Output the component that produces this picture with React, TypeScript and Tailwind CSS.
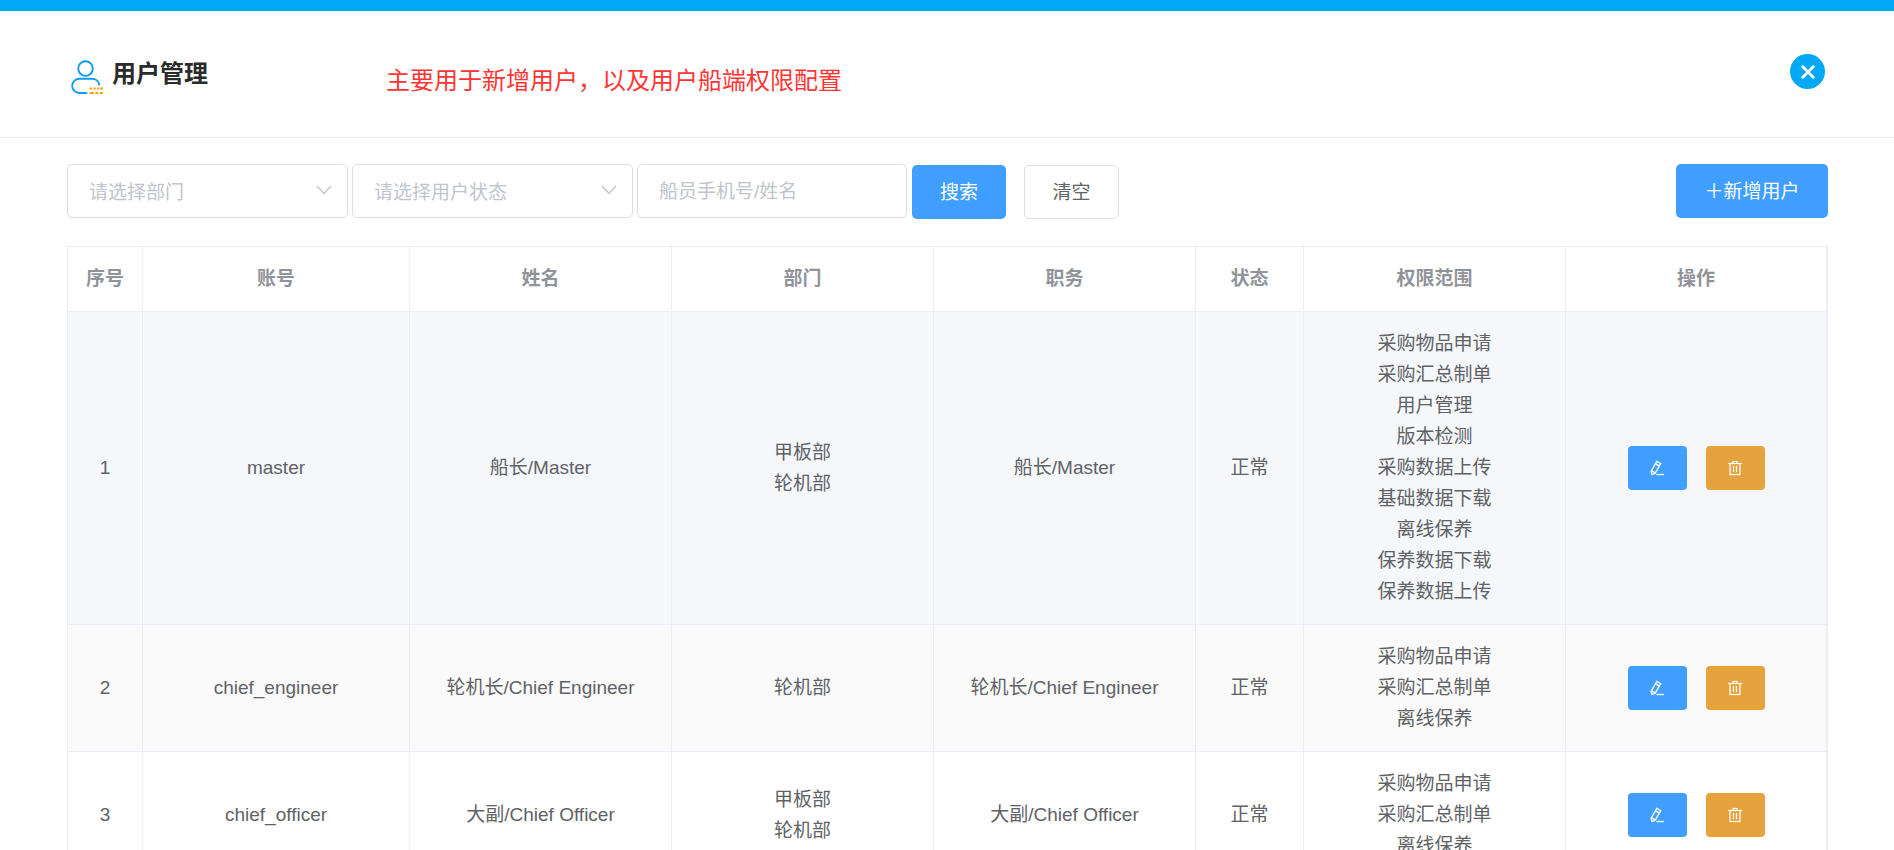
import type { ReactNode } from "react";

type User = {
  account: string;
  name: string;
  departments: string[];
  duty: string;
  status: string;
  scopes: string[];
};

const users: User[] = [
  {
    account: "master",
    name: "船长/Master",
    departments: ["甲板部", "轮机部"],
    duty: "船长/Master",
    status: "正常",
    scopes: [
      "采购物品申请",
      "采购汇总制单",
      "用户管理",
      "版本检测",
      "采购数据上传",
      "基础数据下载",
      "离线保养",
      "保养数据下载",
      "保养数据上传",
    ],
  },
  {
    account: "chief_engineer",
    name: "轮机长/Chief Engineer",
    departments: ["轮机部"],
    duty: "轮机长/Chief Engineer",
    status: "正常",
    scopes: ["采购物品申请", "采购汇总制单", "离线保养"],
  },
  {
    account: "chief_officer",
    name: "大副/Chief Officer",
    departments: ["甲板部", "轮机部"],
    duty: "大副/Chief Officer",
    status: "正常",
    scopes: ["采购物品申请", "采购汇总制单", "离线保养"],
  },
];

const columns = ["序号", "账号", "姓名", "部门", "职务", "状态", "权限范围", "操作"];

// The first row is shown highlighted; the others alternate.
const rowColors = ["bg-[#f5f7fa]", "bg-[#fafafa]", "bg-white"];

function UserIcon() {
  return (
    <svg viewBox="0 0 34 36" className="h-9 w-[34px] shrink-0" fill="none" aria-hidden="true">
      <g stroke="#129bea" strokeWidth="1.9" strokeLinecap="round">
        <circle cx="15.5" cy="8.6" r="7.3" />
        <path d="M16.5 33H9.3a7.1 7.1 0 0 1 0-14.2h12.5c4 0 7 2.4 7.3 5.8" />
      </g>
      <g stroke="#fca311" strokeWidth="2">
        <path d="M19.5 28.4h2.8M23.6 28.4h2.2M27 28.4h2M30 28.4h3" />
        <path d="M19.5 33h4.5M25.3 33h3M29.8 33h3.2" />
      </g>
    </svg>
  );
}

function EditIcon() {
  return (
    <svg viewBox="0 0 1024 1024" className="size-4" fill="currentColor" stroke="currentColor" strokeWidth="24" aria-hidden="true">
      <path d="m199.04 672.64 193.984 112 224-387.968-193.92-112-224 388.032zm-23.872 60.16 32.896 148.288 144.896-45.696zM455.04 229.248l193.92 112 56.704-98.112-193.984-112-56.64 98.112zM104.32 708.8l384-665.024 304.768 175.936L409.152 884.8h.064l-248.448 78.336zm384 254.272v-64h448v64z" />
    </svg>
  );
}

function DeleteIcon() {
  return (
    <svg viewBox="0 0 1024 1024" className="size-4" fill="currentColor" stroke="currentColor" strokeWidth="16" aria-hidden="true">
      <path d="M160 256H96a32 32 0 0 1 0-64h256V95.936a32 32 0 0 1 32-32h256a32 32 0 0 1 32 32V192h256a32 32 0 1 1 0 64h-64v672a32 32 0 0 1-32 32H192a32 32 0 0 1-32-32zm448-64v-64H416v64zM224 896h576V256H224zm192-128a32 32 0 0 1-32-32V416a32 32 0 0 1 64 0v320a32 32 0 0 1-32 32m192 0a32 32 0 0 1-32-32V416a32 32 0 0 1 64 0v320a32 32 0 0 1-32 32" />
    </svg>
  );
}

function FilterSelect({ label, options }: { label: string; options: string[] }) {
  return (
    <div className="grid w-[281px] items-center">
      <select
        aria-label={label}
        defaultValue=""
        className="col-start-1 row-start-1 h-[54px] w-full appearance-none rounded-[5px] border border-[#dcdfe6] bg-white px-[21px] pt-0.5 text-[#c0c4cc]"
      >
        <option value="">{label}</option>
        {options.map((option) => (
          <option key={option}>{option}</option>
        ))}
      </select>
      <svg
        viewBox="0 0 16 10"
        className="pointer-events-none col-start-1 row-start-1 mr-4 mb-0.5 h-2.5 w-4 justify-self-end"
        fill="none"
        stroke="#c0c4cc"
        strokeWidth="1.4"
        aria-hidden="true"
      >
        <path d="m1 1 7 7.5L15 1" />
      </svg>
    </div>
  );
}

function Cell({ children }: { children: ReactNode }) {
  return (
    <td className="border-r border-b border-[#ebeef5] px-3 pt-4 pb-[17px] text-center align-middle">
      {children}
    </td>
  );
}

export default function App() {
  return (
    <div className="h-screen overflow-hidden bg-white font-['Liberation_Sans','Noto_Sans_CJK_SC',sans-serif] text-[19px] leading-[31px] text-[#606266]">
      <div className="h-[11px] bg-[#03a9f4]" />
      <header className="flex h-[127px] items-start border-b border-[#ebebeb] px-[67px] pt-[43px]">
        <div className="flex w-[319px] gap-2 pl-[3px]">
          <div className="pt-1.5">
            <UserIcon />
          </div>
          <h1 className="text-2xl leading-[40px] font-bold text-[#2b2b2b]">用户管理</h1>
        </div>
        <p className="pt-2 text-2xl leading-[38px] text-[#ff3535]">
          主要用于新增用户，以及用户船端权限配置
        </p>
        <button
          type="button"
          aria-label="关闭"
          className="mr-0.5 ml-auto flex size-[35px] items-center justify-center rounded-full bg-[#03a9f4] text-white"
        >
          <svg viewBox="0 0 14 14" className="size-3.5" stroke="currentColor" strokeWidth="2.8" strokeLinecap="round" aria-hidden="true">
            <path d="m1.8 1.8 10.4 10.4M12.2 1.8 1.8 12.2" />
          </svg>
        </button>
      </header>

      <main className="px-[67px] pt-[26px]">
        <form className="flex items-start">
          <div className="flex gap-1">
            <FilterSelect label="请选择部门" options={["甲板部", "轮机部"]} />
            <FilterSelect label="请选择用户状态" options={["正常"]} />
            <input
              type="text"
              aria-label="船员手机号/姓名"
              placeholder="船员手机号/姓名"
              className="h-[54px] w-[270px] rounded-[5px] border border-[#dcdfe6] px-[21px] pt-0.5 placeholder:text-[#c0c4cc]"
            />
          </div>
          <div className="flex gap-[18px] pt-px pl-[5px]">
            <button type="button" className="h-[54px] w-[94px] rounded-[5px] bg-[#409eff] text-white">
              搜索
            </button>
            <button type="button" className="h-[54px] w-[95px] rounded-[5px] border border-[#dcdfe6] bg-white">
              清空
            </button>
          </div>
          <button type="button" className="-mr-px ml-auto h-[54px] w-[152px] rounded-[5px] bg-[#409eff] text-white">
            ＋新增用户
          </button>
        </form>

        <div className="mt-[27px] -mr-px border-t border-r border-l border-[#ebeef5]">
          <table className="w-full table-fixed border-separate border-spacing-0">
            <colgroup>
              <col className="w-[75px]" />
              <col className="w-[267px]" />
              <col className="w-[262px]" />
              <col className="w-[262px]" />
              <col className="w-[262px]" />
              <col className="w-[108px]" />
              <col className="w-[262px]" />
              <col />
            </colgroup>
            <thead>
              <tr>
                {columns.map((column) => (
                  <th
                    key={column}
                    scope="col"
                    className="border-r border-b border-[#ebeef5] pt-4 pb-[17px] text-center font-bold text-[#909399]"
                  >
                    {column}
                  </th>
                ))}
              </tr>
            </thead>
            <tbody>
              {users.map((user, index) => (
                <tr key={user.account} className={rowColors[index]}>
                  <Cell>{index + 1}</Cell>
                  <Cell>{user.account}</Cell>
                  <Cell>{user.name}</Cell>
                  <Cell>
                    {user.departments.map((department) => (
                      <div key={department}>{department}</div>
                    ))}
                  </Cell>
                  <Cell>{user.duty}</Cell>
                  <Cell>{user.status}</Cell>
                  <Cell>
                    {user.scopes.map((scope) => (
                      <div key={scope}>{scope}</div>
                    ))}
                  </Cell>
                  <Cell>
                    <div className="flex justify-center gap-[19px]">
                      <button
                        type="button"
                        aria-label="编辑"
                        className="flex h-11 w-[59px] items-center justify-center rounded bg-[#409eff] text-white"
                      >
                        <EditIcon />
                      </button>
                      <button
                        type="button"
                        aria-label="删除"
                        className="flex h-11 w-[59px] items-center justify-center rounded bg-[#e6a23c] text-white"
                      >
                        <DeleteIcon />
                      </button>
                    </div>
                  </Cell>
                </tr>
              ))}
            </tbody>
          </table>
        </div>
      </main>
    </div>
  );
}
